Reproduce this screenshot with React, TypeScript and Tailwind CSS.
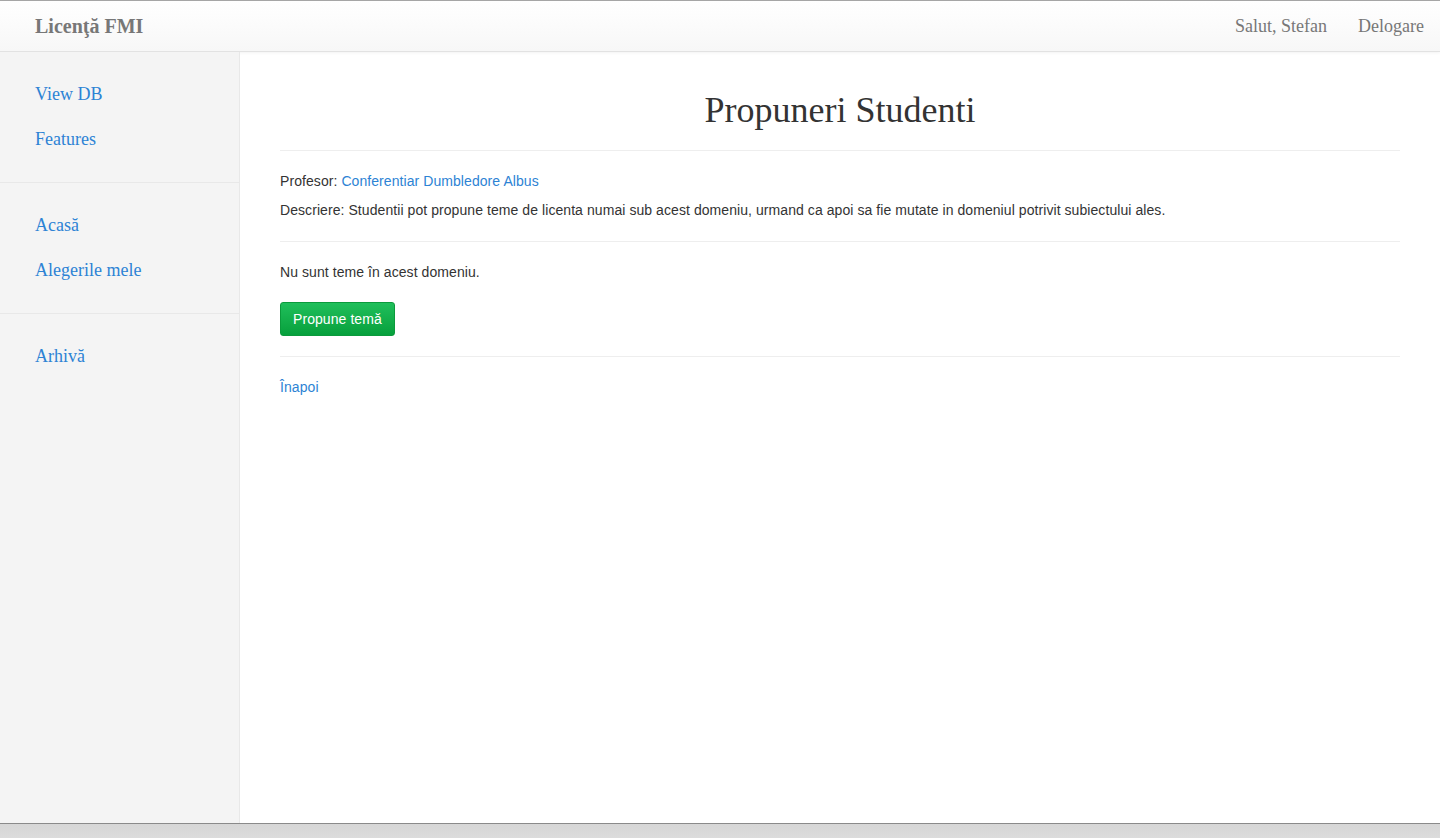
import React from "react";

const serif = "font-['Liberation_Serif','Times_New_Roman',serif]";
const sans = "font-['Liberation_Sans',Arial,sans-serif]";

const sideSections = [
  ["View DB", "Features"],
  ["Acasă", "Alegerile mele"],
  ["Arhivă"],
];

const App = () => {
  return (
    <div className="w-[1440px] h-[838px] flex flex-col bg-white overflow-hidden">
      <div className="h-px bg-[#a8a8a8]" />
      {/* navbar */}
      <div
        className={`h-[51px] shrink-0 flex items-center justify-between pl-[35px] pr-[16px] border-b border-[#e2e2e2] bg-gradient-to-b from-white to-[#f7f7f7] shadow-[0_1px_3px_rgba(0,0,0,0.05)] ${serif}`}
      >
        <span className="text-[20px] font-bold text-[#777]">Licenţă FMI</span>
        <div className="flex items-center gap-[31px] text-[18px] text-[#777]">
          <span>Salut, Stefan</span>
          <span>Delogare</span>
        </div>
      </div>

      <div className="h-[771px] shrink-0 flex">
        {/* sidebar */}
        <div className="w-[240px] bg-[#f4f4f4] border-r border-[#e8e8e8] flex flex-col">
          {sideSections.map((links, i) => (
            <div
              key={i}
              className={`py-5 ${i < sideSections.length - 1 ? "border-b border-[#e8e8e8]" : ""}`}
            >
              {links.map((l) => (
                <div
                  key={l}
                  className={`h-[45px] flex items-center pl-[35px] text-[18px] text-[#2d83d4] ${serif}`}
                >
                  {l}
                </div>
              ))}
            </div>
          ))}
        </div>

        {/* main */}
        <div className={`flex-1 px-10 pt-[38px] text-[14px] tracking-[0.07px] text-[#333] ${sans}`}>
          <h1
            className={`text-center text-[36px] leading-[40px] tracking-normal text-[#333] ${serif}`}
          >
            Propuneri Studenti
          </h1>
          <div className="h-px bg-[#eee] mt-5" />
          <div className="pt-5 pb-[21px]">
            <p className="leading-5">
              Profesor:{" "}
              <span className="text-[#2d83d4]">Conferentiar Dumbledore Albus</span>
            </p>
            <p className="leading-5 mt-[9px]">
              Descriere: Studentii pot propune teme de licenta numai sub acest
              domeniu, urmand ca apoi sa fie mutate in domeniul potrivit
              subiectului ales.
            </p>
          </div>
          <div className="h-px bg-[#eee]" />
          <p className="leading-5 mt-5">Nu sunt teme în acest domeniu.</p>
          <button className="mt-5 h-[34px] px-[12px] rounded-[3px] border border-[#0b9a3c] bg-gradient-to-b from-[#1fbf5b] to-[#06a03c] text-white text-[14px] leading-5">
            Propune temă
          </button>
          <div className="h-px bg-[#eee] mt-5" />
          <p className="leading-5 mt-5 text-[#2d83d4]">Înapoi</p>
        </div>
      </div>

      <div className="h-px shrink-0 bg-[#8a8a8a]" />
      <div className="flex-1 bg-gradient-to-b from-[#d6d6d6] to-[#dcdcdc]" />
    </div>
  );
};

export default App;
